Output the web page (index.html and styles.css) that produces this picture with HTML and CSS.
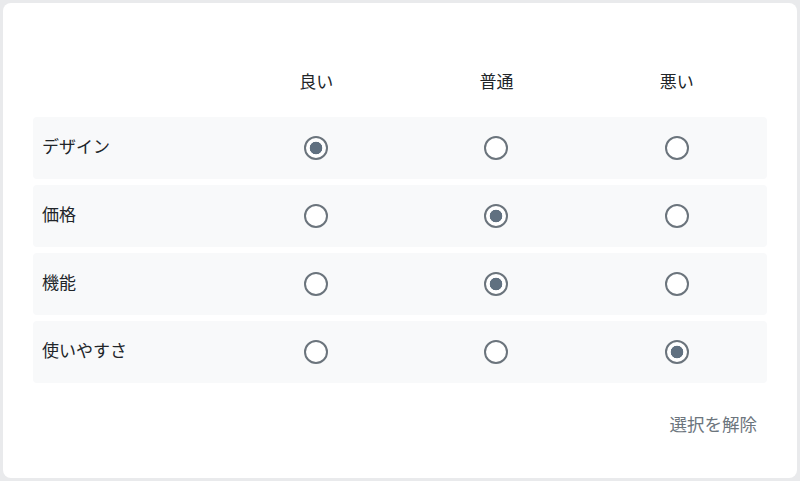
FILE: index.html
```html
<!DOCTYPE html>
<html lang="ja">
<head>
  <meta charset="UTF-8">
  <meta name="viewport" content="width=device-width, initial-scale=1.0">
  <title>評価</title>
  <link rel="stylesheet" href="styles.css">
</head>
<body>
  <!-- Rating Card -->
  <div class="card">
    <div class="grid-head">
      <div></div>
      <div class="col-title">良い</div>
      <div class="col-title">普通</div>
      <div class="col-title">悪い</div>
    </div>

    <div class="rows">
      <div class="row">
        <div class="row-label">デザイン</div>
        <div class="cell"><input type="radio" name="design" checked></div>
        <div class="cell"><input type="radio" name="design"></div>
        <div class="cell"><input type="radio" name="design"></div>
      </div>
      <div class="row">
        <div class="row-label">価格</div>
        <div class="cell"><input type="radio" name="price"></div>
        <div class="cell"><input type="radio" name="price" checked></div>
        <div class="cell"><input type="radio" name="price"></div>
      </div>
      <div class="row">
        <div class="row-label">機能</div>
        <div class="cell"><input type="radio" name="feature"></div>
        <div class="cell"><input type="radio" name="feature" checked></div>
        <div class="cell"><input type="radio" name="feature"></div>
      </div>
      <div class="row">
        <div class="row-label">使いやすさ</div>
        <div class="cell"><input type="radio" name="usability"></div>
        <div class="cell"><input type="radio" name="usability"></div>
        <div class="cell"><input type="radio" name="usability" checked></div>
      </div>
    </div>

    <div class="actions">
      <button type="button" class="clear-btn">選択を解除</button>
    </div>
  </div>
</body>
</html>
```

FILE: styles.css
```css
* {
    margin: 0;
    padding: 0;
    box-sizing: border-box;
}

body {
    background-color: #e9eaec;
    padding: 3px;
    font-family: "Noto Sans CJK JP", "Noto Sans", sans-serif;
    color: #212529;
}

/* Card */
.card {
    background-color: #fff;
    border-radius: 8px;
    height: 475px;
    padding: 61px 30px 0 30px;
}

/* Header row */
.grid-head,
.row {
    display: grid;
    grid-template-columns: 193px 1fr 1fr 1fr;
    align-items: center;
}

.grid-head {
    height: 36px;
    margin-bottom: 17px;
}

.col-title {
    text-align: center;
    font-size: 17px;
    line-height: 36px;
    margin-top: -3px;
}

/* Rows */
.rows {
    display: flex;
    flex-direction: column;
    gap: 6px;
}

.row {
    height: 62px;
    background-color: #f8f9fa;
    border-radius: 4px;
}

.row-label {
    padding-left: 9px;
    font-size: 17px;
    margin-top: -6px;
}

.cell {
    display: flex;
    justify-content: center;
    align-items: center;
}

.cell input {
    appearance: none;
    -webkit-appearance: none;
    width: 24px;
    height: 24px;
    border: 2px solid #6b747c;
    border-radius: 50%;
    background-color: #fff;
    margin: 0;
    cursor: pointer;
}

.cell input:checked {
    background: radial-gradient(circle, #607080 0 6px, #fff 6.6px);
}

/* Clear button */
.actions {
    display: flex;
    justify-content: flex-end;
    margin-top: 23px;
}

.clear-btn {
    font-family: inherit;
    font-size: 17.5px;
    line-height: 24px;
    color: #6c757d;
    background: none;
    border: none;
    padding: 6px 10px;
    cursor: pointer;
}
```
